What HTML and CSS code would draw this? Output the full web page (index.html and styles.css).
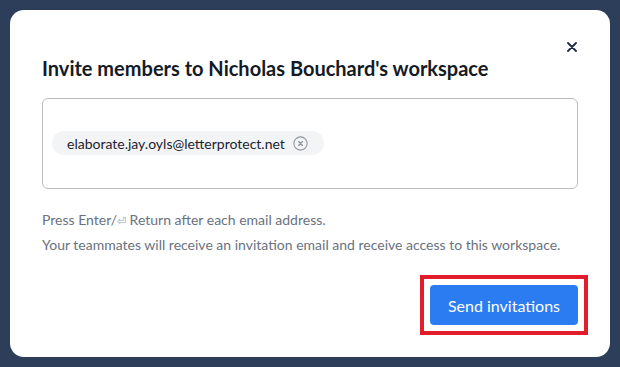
FILE: index.html
```html
<!DOCTYPE html>
<html lang="en">
<head>
<meta charset="utf-8">
<title>Invite members</title>
<link rel="stylesheet" href="styles.css">
</head>
<body>
<div class="modal">
  <button class="close" aria-label="Close">
    <svg width="10" height="10" viewBox="0 0 10 10"><path d="M1 1L9 9M9 1L1 9" stroke="#1f2a44" stroke-width="1.8" stroke-linecap="round"/></svg>
  </button>
  <h2 class="title">Invite members to Nicholas Bouchard's workspace</h2>
  <div class="field">
    <span class="chip">elaborate.jay.oyls@letterprotect.net
      <svg class="chip-x" width="15" height="15" viewBox="0 0 14 14"><circle cx="7" cy="7" r="6.2" fill="none" stroke="#8f96a0" stroke-width="1"/><path d="M5.2 5.2L8.8 8.8M8.8 5.2L5.2 8.8" stroke="#8f96a0" stroke-width="1.2" stroke-linecap="round"/></svg>
    </span>
  </div>
  <p class="hint">Press Enter/<span class="ret">⏎</span> Return after each email address.</p>
  <p class="hint">Your teammates will receive an invitation email and receive access to this workspace.</p>
  <div class="actions">
    <div class="highlight">
      <button class="send">Send invitations</button>
    </div>
  </div>
</div>
</body>
</html>
```
FILE: styles.css
```css
html, body {
  margin: 0;
  padding: 0;
}
body {
  background: #2d3e5b;
  font-family: Lato, "Noto Sans", sans-serif;
  width: 620px;
  height: 367px;
  overflow: hidden;
  padding: 10px 10px 0 10px;
  box-sizing: border-box;
}
.modal {
  position: relative;
  width: 600px;
  height: 347px;
  background: #ffffff;
  border-radius: 14px;
  box-sizing: border-box;
  padding: 44px 32px 0 32px;
}
.close {
  position: absolute;
  top: 27px;
  right: 28px;
  width: 20px;
  height: 20px;
  padding: 0;
  border: none;
  background: transparent;
  display: flex;
  align-items: center;
  justify-content: center;
}
.title {
  margin: 0;
  font-size: 20px;
  line-height: 28px;
  font-weight: 700;
  color: #141a26;
}
.field {
  margin-top: 16px;
  height: 91px;
  box-sizing: border-box;
  border: 1px solid #b9bcc1;
  border-radius: 6px;
  padding: 32px 9px 0 9px;
}
.chip {
  display: inline-flex;
  align-items: center;
  gap: 8px;
  height: 24px;
  padding: 0 16px 0 15px;
  border-radius: 12px;
  background: #f2f4f6;
  font-size: 14px;
  color: #1c2330;
}
.chip-x {
  display: block;
}
.hint {
  margin: 0;
  font-size: 14px;
  line-height: 24px;
  color: #6a7280;
}
.field + .hint {
  margin-top: 19px;
}
.ret {
  font-size: 11px;
  color: #9aa1ab;
}
.actions {
  display: flex;
  justify-content: flex-end;
  margin-top: 18px;
  margin-right: -10px;
}
.highlight {
  border: 4px solid #e21d2b;
  padding: 6px;
}
.send {
  display: block;
  width: 148px;
  height: 40px;
  border: none;
  border-radius: 4px;
  background: #2b7cf0;
  color: #ffffff;
  font-family: Lato, "Noto Sans", sans-serif;
  font-size: 16px;
}
```
